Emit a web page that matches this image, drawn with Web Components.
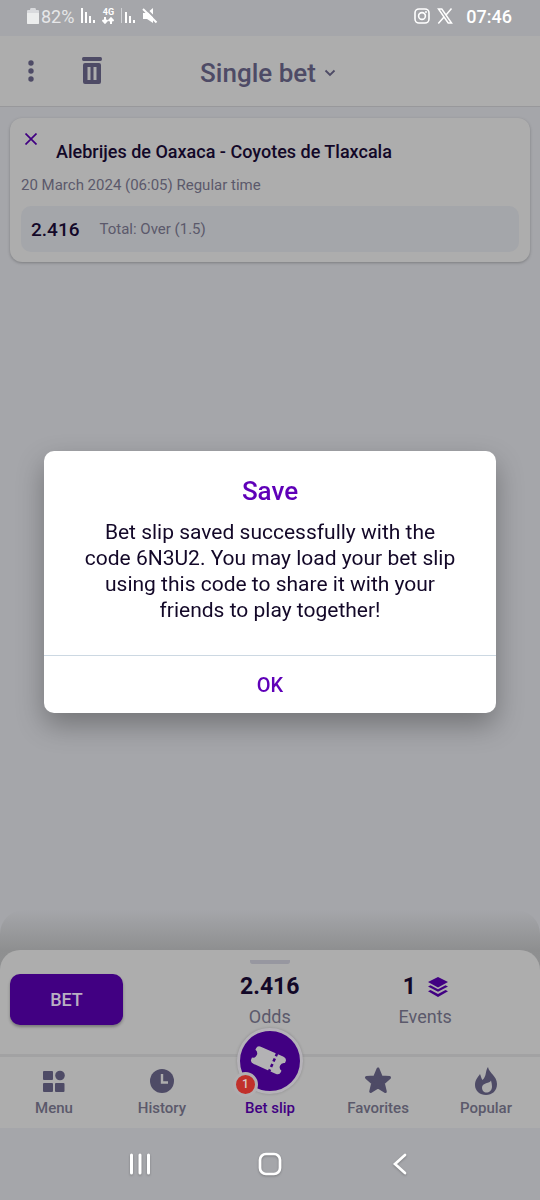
<!DOCTYPE html>
<html lang="en">
<head>
  <meta charset="utf-8">
  <meta name="viewport" content="width=device-width, initial-scale=1">
  <title>Bet slip</title>
  <style>
    body {
      margin: 0;
      font-family: Roboto, "Liberation Sans", sans-serif;
      --page: #a5a6aa;
      --surface: #adadad;
      --purple: #410082;
      --accent: #5f00b8;
      --ink: #130828;
      --muted: #5b596b;
      --icon: #4e4b66;
    }
  </style>
</head>
<body>
  <bet-app></bet-app>

  <script>
    const icons = {
      battery: ['0 0 12 16', '<path fill="#d9dadd" d="M4 0h4q1 0 1 2h2q1 0 1 1v12q0 1-1 1H1q-1 0-1-1V3q0-1 1-1h2q0-2 1-2z"/><path fill="#eceded" d="M0 5h12v10q0 1-1 1H1q-1 0-1-1z"/>'],
      signal: ['0 0 14 16', '<path fill="#fff" d="M0 0h2v15H0zM4 4h2v11H4zM8 8h2v7H8zM12 12h2v3h-2z"/>'],
      weakSignal: ['0 0 14 16', '<path fill="#d0d1d4" d="M0 0h1v15H0z"/><path fill="#fff" d="M4 4h2v11H4zM8 8h2v7H8zM12 12h2v3h-2z"/>'],
      arrows: ['0 0 12 7', '<path fill="none" stroke="#fff" stroke-width="2" d="M3 0v5M0.5 3L3 5.7 5.5 3M9 7V2M6.5 4L9 1.3 11.500 4"/>'],
      mute: ['0 0 16 16', '<path fill="#fff" d="M1 5h4l6-5v15l-6-4H1z"/><path stroke="#a5a6aa" stroke-width="2" d="M3 0l13 13"/><path stroke="#fff" stroke-width="2" d="M1 1l13.500 13.500"/>'],
      instagram: ['0 0 16 16', '<g fill="none" stroke="#fff" stroke-width="1.600"><rect x="1" y="1" width="14" height="14" rx="4"/><circle cx="8" cy="8" r="3.400"/></g><circle cx="12" cy="4" r="1" fill="#fff"/>'],
      xLogo: ['0 0 16 16', '<path fill="none" stroke="#fff" stroke-width="1.500" d="M1.500 1h3.300l9.700 14h-3.300zM14.500 .5L9 7M6.800 9.200L1.300 15.500"/>'],
      dots: ['0 0 6 22', '<g fill="#4e4b66"><circle cx="3" cy="3" r="2.700"/><circle cx="3" cy="11" r="2.700"/><circle cx="3" cy="19" r="2.700"/></g>'],
      trash: ['0 0 20 28', '<path fill="#4e4b66" fill-rule="evenodd" d="M1.500 0h17q1.500 0 1.500 2t-1.500 2h-17Q0 4 0 2t1.500-2zM3 6h14q2 0 2 2v17q0 2-2 2H3q-2 0-2-2V8q0-2 2-2zM5.500 10v13h3V10zM11.500 10v13h3V10z"/>'],
      chevron: ['0 0 12 8', '<path fill="none" stroke="#4e4b66" stroke-width="1.800" d="M1.500 1.500L6 6l4.500-4.500"/>'],
      close: ['0 0 12 12', '<path stroke="#410082" stroke-width="1.700" d="M.5 .5l11 11M11.500 .5l-11 11"/>'],
      layers: ['0 0 20 20', '<g fill="#410082"><path d="M10 0l10 5-10 5.500L0 5z"/><path d="M0 9.500l2.500-1.300L10 12.200l7.500-4L20 9.500l-10 5.300z"/><path d="M0 14.300L2.500 13l7.500 4 7.500-4 2.500 1.300L10 20z"/></g>'],
      menu: ['0 0 28 28', '<g fill="#4e4b66"><rect x="3" y="4" width="10" height="9" rx="1"/><circle cx="20" cy="8.500" r="4.800"/><rect x="3" y="16" width="10" height="9" rx="1"/><rect x="15" y="16" width="9.500" height="9" rx="1"/></g>'],
      clock: ['0 0 28 28', '<circle cx="14" cy="14" r="12" fill="#4e4b66"/><path fill="none" stroke="#adadad" stroke-width="2.400" d="M14 7v8.500h6"/>'],
      star: ['0 0 28 28', '<path fill="#4e4b66" stroke="#4e4b66" stroke-width="3" stroke-linejoin="round" d="M14 2l3.300 8 8.200.6-6.200 5.500 2 8.400-7.300-4.500-7.300 4.500 2-8.400-6.200-5.500 8.200-.6z"/>'],
      flame: ['0 0 28 28', '<path fill="#4e4b66" d="M16 0c1 6 9 9 9 17 0 7-5 11-11 11S3 24 3 18c0-5 3-8 5-11 1 2 1 4 2.500 6C15 9 13 4 16 0z"/><path fill="#adadad" d="M19 13.500c-1 3-9 2-9 7 0 3 2 5 4.500 5s5.500-2 5.500-6c0-2-.5-4-1-6z"/>'],
      ticket: ['0 0 60 60', '<g transform="rotate(24 30 30) translate(4.500 4.500) scale(.85)"><path fill="#b3b2b4" d="M14 19h28q5 0 5 4v2q-4 1-4 5t4 5v2q0 4-5 4H14q-5 0-5-4v-2q4-1 4-5t-4-5v-2q0-4 5-4z"/><path stroke="#410082" stroke-width="3" stroke-dasharray="4 3" d="M34 18v24"/></g>'],
      recents: ['0 0 24 24', '<path stroke="#fff" stroke-width="3" stroke-linecap="round" d="M3.500 3v18M12 3v18M20.500 3v18"/>'],
      home: ['0 0 24 24', '<rect x="2" y="2" width="20" height="20" rx="6" fill="none" stroke="#fff" stroke-width="2.700"/>'],
      back: ['0 0 24 24', '<path fill="none" stroke="#fff" stroke-width="2.700" stroke-linecap="round" d="M17 3L7 12l10 9"/>']
    };

    function render(element, html) {
      const template = document.createElement('template');
      template.innerHTML = html;
      element.attachShadow({ mode: 'open' });
      element.shadowRoot.appendChild(template.content.cloneNode(true));
    }

    class AppIcon extends HTMLElement {
      connectedCallback() {
        const [box, shapes] = icons[this.getAttribute('name')];
        const [, , width, height] = box.split(' ');
        render(this, `
          <style>
            :host { display: block; flex: none; }
            svg { display: block; }
          </style>
          <svg viewBox="${box}" width="${width}" height="${height}" aria-hidden="true">${shapes}</svg>
        `);
      }
    }

    class StatusBar extends HTMLElement {
      constructor() {
        super();
        render(this, `
          <style>
            :host {
              display: flex;
              justify-content: space-between;
              align-items: center;
              height: 32px;
              padding: 0 28px 4px 27px;
              background: var(--page);
              color: #fff;
              font-size: 18px;
            }
            div { display: flex; align-items: center; gap: 7px; }
            .charge { gap: 2px; color: #e6e6e8; }
            .net { display: grid; gap: 1px; justify-items: center; font-size: 9px; line-height: 8px; font-weight: 700; }
            time { padding-left: 6px; font-weight: 500; }
          </style>
          <div>
            <div class="charge"><app-icon name="battery"></app-icon><span>82%</span></div>
            <app-icon name="signal"></app-icon>
            <div class="net"><span>4G</span><app-icon name="arrows"></app-icon></div>
            <app-icon name="weakSignal"></app-icon>
            <app-icon name="mute"></app-icon>
          </div>
          <div>
            <app-icon name="instagram"></app-icon>
            <app-icon name="xLogo"></app-icon>
            <time>07:46</time>
          </div>
        `);
      }
    }

    class SlipHeader extends HTMLElement {
      constructor() {
        super();
        render(this, `
          <style>
            :host {
              display: grid;
              grid-template-columns: 1fr auto 1fr;
              align-items: center;
              height: 70px;
              background: var(--surface);
              border-bottom: 1px solid #98989b;
            }
            button {
              display: flex;
              align-items: center;
              gap: 8px;
              border: 0;
              padding: 0;
              background: none;
              color: var(--icon);
              font: 500 26px/32px Roboto, sans-serif;
              cursor: pointer;
            }
            .tools { display: flex; align-items: center; gap: 48px; padding-left: 28px; }
            .type { padding: 3px 4px 0 0; }
          </style>
          <div class="tools">
            <button aria-label="More"><app-icon name="dots"></app-icon></button>
            <button aria-label="Clear slip"><app-icon name="trash"></app-icon></button>
          </div>
          <button class="type"><slot></slot><app-icon name="chevron"></app-icon></button>
        `);
      }
    }

    class BetCard extends HTMLElement {
      constructor() {
        super();
        render(this, `
          <style>
            :host {
              display: block;
              margin: 11px 10px;
              padding: 10px 11px;
              border-radius: 12px;
              background: var(--surface);
              box-shadow: 0 1px 3px rgba(0, 0, 0, .25);
              color: var(--muted);
            }
            header { display: flex; gap: 15px; }
            button { align-self: flex-start; border: 0; padding: 5px 4px; background: none; cursor: pointer; }
            h2 { margin: 0; padding-top: 12px; color: var(--ink); font-size: 18px; line-height: 24px; font-weight: 500; }
            p { margin: 10px 0 10px; font-size: 15px; line-height: 22px; }
            .pick {
              display: flex;
              align-items: center;
              gap: 20px;
              padding: 0 10px;
              height: 46px;
              border-radius: 10px;
              background: #a4a6aa;
              font-size: 15px;
            }
            .odds { color: var(--ink); font-size: 19px; font-weight: 500; }
          </style>
          <header>
            <button aria-label="Remove"><app-icon name="close"></app-icon></button>
            <h2><slot name="teams"></slot></h2>
          </header>
          <p><slot name="time"></slot></p>
          <div class="pick">
            <span class="odds"><slot name="odds"></slot></span>
            <slot name="pick"></slot>
          </div>
        `);
      }
    }

    class BetSheet extends HTMLElement {
      constructor() {
        super();
        render(this, `
          <style>
            :host {
              display: block;
              padding-top: 40px;
              border-radius: 24px 24px 0 0;
              background: linear-gradient(#a5a6aa, #8e8f90 40px, #969798);
            }
            .sheet {
              height: 104px;
              border-radius: 20px 20px 0 0;
              background: var(--surface);
              border-bottom: 3px solid #a2a2a3;
            }
            .handle { width: 40px; height: 4px; margin: 0 auto; border-top: 10px solid transparent; background: #9797a0; background-clip: padding-box; border-radius: 2px; }
            .row {
              display: grid;
              grid-template-columns: 182px 1fr 1fr;
              padding: 10px 37px 0 10px;
              text-align: center;
            }
            .bet {
              justify-self: start;
              width: 113px;
              height: 51px;
              border: 0;
              border-radius: 10px;
              background: var(--purple);
              box-shadow: 0 2px 3px rgba(0, 0, 0, .3);
              color: #b9b0c2;
              font: 500 18px Roboto, sans-serif;
              cursor: pointer;
            }
            .value {
              display: flex;
              justify-content: center;
              align-items: center;
              gap: 12px;
              color: var(--ink);
              font-size: 23px;
              line-height: 26px;
              font-weight: 700;
            }
            .label { padding-top: 5px; color: var(--muted); font-size: 18px; line-height: 24px; }
          </style>
          <div class="sheet">
            <div class="handle"></div>
            <div class="row">
              <button class="bet">BET</button>
              <div>
                <div class="value">2.416</div>
                <div class="label">Odds</div>
              </div>
              <div>
                <div class="value">1 <app-icon name="layers"></app-icon></div>
                <div class="label">Events</div>
              </div>
            </div>
          </div>
        `);
      }
    }

    class TabBar extends HTMLElement {
      constructor() {
        super();
        render(this, `
          <style>
            nav { display: grid; grid-template-columns: repeat(5, 1fr); height: 71px; background: var(--surface); }
            a {
              display: flex;
              flex-direction: column;
              align-items: center;
              gap: 4px;
              padding-top: 10px;
              position: relative;
              color: var(--muted);
              font-size: 15px;
              line-height: 18px;
              font-weight: 500;
              text-decoration: none;
            }
            .current { justify-content: flex-end; padding: 0 0 11px; color: var(--purple); }
            /* the round button sticks out over the sheet */
            .round {
              position: absolute;
              bottom: 34px;
              border: 3px solid #b5b2b8;
              border-radius: 50%;
              background: var(--purple);
              box-shadow: 0 0 3px rgba(0, 0, 0, .2);
            }
            .count {
              position: absolute;
              left: -7px;
              bottom: -6px;
              width: 19px;
              border: 3px solid #b1afb1;
              border-radius: 50%;
              background: #c1302b;
              color: #d8c9c9;
              font-size: 12px;
              line-height: 19px;
              text-align: center;
            }
          </style>
          <nav>
            <a href="#menu"><app-icon name="menu"></app-icon>Menu</a>
            <a href="#history"><app-icon name="clock"></app-icon>History</a>
            <a href="#slip" class="current">
              <span class="round"><app-icon name="ticket"></app-icon><span class="count">1</span></span>
              Bet slip
            </a>
            <a href="#favorites"><app-icon name="star"></app-icon>Favorites</a>
            <a href="#popular"><app-icon name="flame"></app-icon>Popular</a>
          </nav>
        `);
      }
    }

    class SystemNav extends HTMLElement {
      constructor() {
        super();
        render(this, `
          <style>
            :host {
              display: grid;
              grid-template-columns: repeat(3, 24%);
              justify-content: center;
              height: 72px;
              background: var(--page);
            }
            button {
              display: grid;
              place-items: center;
              border: 0;
              padding: 0;
              background: none;
              filter: drop-shadow(0 1px 1px rgba(0, 0, 0, .25));
            }
          </style>
          <button aria-label="Recents"><app-icon name="recents"></app-icon></button>
          <button aria-label="Home"><app-icon name="home"></app-icon></button>
          <button aria-label="Back"><app-icon name="back"></app-icon></button>
        `);
      }
    }

    class SaveDialog extends HTMLElement {
      constructor() {
        super();
        render(this, `
          <style>
            :host {
              position: fixed;
              inset: 0;
              display: grid;
              align-items: center;
              padding: 36px 44px 72px;
            }
            dialog {
              position: static;
              box-sizing: border-box;
              width: auto;
              max-width: none;
              margin: 0;
              border: 0;
              padding: 24px 0 0;
              border-radius: 10px;
              background: #fff;
              box-shadow: 0 12px 28px rgba(0, 0, 0, .3);
              color: var(--ink);
              text-align: center;
            }
            h1 { margin: 0 0 12px; color: var(--accent); font-size: 26px; line-height: 32px; font-weight: 500; }
            p { margin: 0; padding: 0 38px 32px; font-size: 21px; line-height: 26px; }
            button {
              width: 100%;
              height: 58px;
              border: 0;
              border-top: 1px solid #ccd8e2;
              background: none;
              color: var(--accent);
              font: 500 20px Roboto, sans-serif;
              cursor: pointer;
            }
          </style>
          <dialog open aria-labelledby="title">
            <h1 id="title"><slot name="title"></slot></h1>
            <p><slot></slot></p>
            <button>OK</button>
          </dialog>
        `);
        this.shadowRoot.querySelector('button').addEventListener('click', () => this.remove());
      }
    }

    class BetApp extends HTMLElement {
      constructor() {
        super();
        render(this, `
          <style>
            :host { display: flex; flex-direction: column; min-height: 100vh; background: var(--page); }
            main { flex: 1; }
          </style>
          <status-bar></status-bar>
          <slip-header>Single bet</slip-header>
          <main>
            <bet-card>
              <span slot="teams">Alebrijes de Oaxaca - Coyotes de Tlaxcala</span>
              <span slot="time">20 March 2024 (06:05) Regular time</span>
              <span slot="odds">2.416</span>
              <span slot="pick">Total: Over (1.5)</span>
            </bet-card>
          </main>
          <bet-sheet></bet-sheet>
          <tab-bar></tab-bar>
          <system-nav></system-nav>
          <save-dialog>
            <span slot="title">Save</span>
            Bet slip saved successfully with the code 6N3U2. You may load your bet slip using this code to share it with your friends to play together!
          </save-dialog>
        `);
      }
    }

    customElements.define('app-icon', AppIcon);
    customElements.define('status-bar', StatusBar);
    customElements.define('slip-header', SlipHeader);
    customElements.define('bet-card', BetCard);
    customElements.define('bet-sheet', BetSheet);
    customElements.define('tab-bar', TabBar);
    customElements.define('system-nav', SystemNav);
    customElements.define('save-dialog', SaveDialog);
    customElements.define('bet-app', BetApp);
  </script>
</body>
</html>
